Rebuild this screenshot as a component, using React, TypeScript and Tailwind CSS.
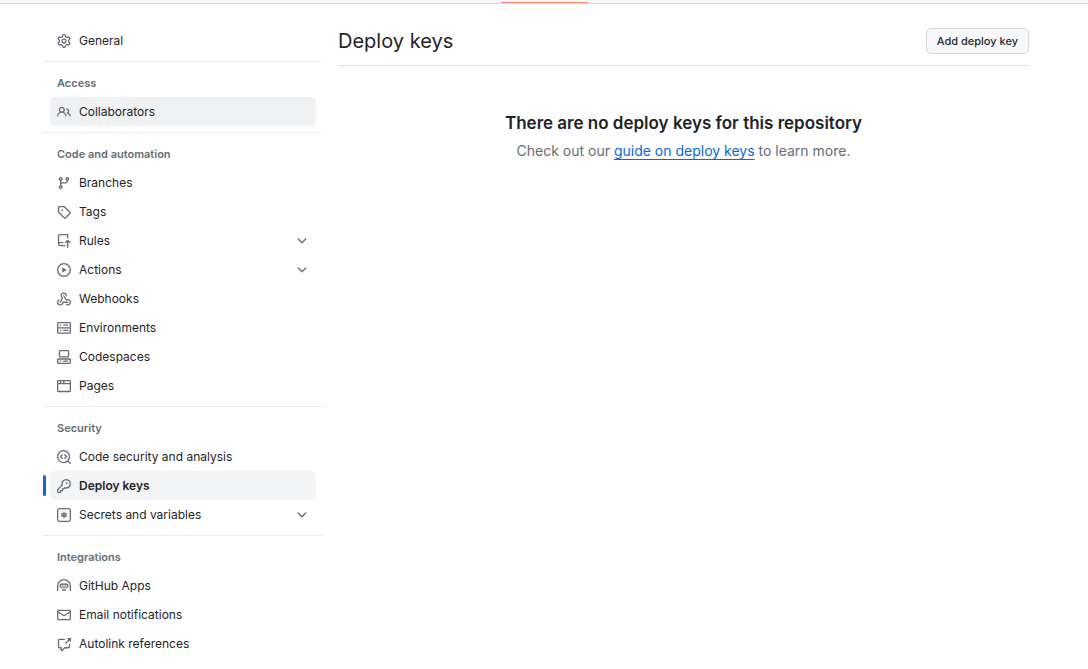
import type { ReactNode } from "react";

const icons = {
  gear: "M8 0a8.2 8.2 0 0 1 .701.031C9.444.095 9.99.645 10.16 1.29l.288 1.107c.018.066.079.158.212.224.231.114.454.243.668.386.123.082.233.09.299.071l1.103-.303c.644-.176 1.392.021 1.82.63.27.385.506.792.704 1.218.315.675.111 1.422-.364 1.891l-.814.806c-.049.048-.098.147-.088.294.016.257.016.515 0 .772-.01.147.038.246.088.294l.814.806c.475.469.679 1.216.364 1.891a7.977 7.977 0 0 1-.704 1.217c-.428.61-1.176.807-1.82.63l-1.102-.302c-.067-.019-.177-.011-.3.071a5.909 5.909 0 0 1-.668.386c-.133.066-.194.158-.211.224l-.29 1.106c-.168.646-.715 1.196-1.458 1.26a8.006 8.006 0 0 1-1.402 0c-.743-.064-1.289-.614-1.458-1.26l-.289-1.106c-.018-.066-.079-.158-.212-.224a5.738 5.738 0 0 1-.668-.386c-.123-.082-.233-.09-.299-.071l-1.103.303c-.644.176-1.392-.021-1.82-.63a8.12 8.12 0 0 1-.704-1.218c-.315-.675-.111-1.422.363-1.891l.815-.806c.05-.048.098-.147.088-.294a6.214 6.214 0 0 1 0-.772c.01-.147-.038-.246-.088-.294l-.815-.806C.635 6.045.431 5.298.746 4.623a7.92 7.92 0 0 1 .704-1.217c.428-.61 1.176-.807 1.82-.63l1.102.302c.067.019.177.011.3-.071.214-.143.437-.272.668-.386.133-.066.194-.158.211-.224l.29-1.106C6.009.645 6.556.095 7.299.03 7.53.01 7.764 0 8 0Zm-.571 1.525c-.036.003-.108.036-.137.146l-.289 1.105c-.147.561-.549.967-.998 1.189-.173.086-.34.183-.5.29-.417.278-.97.423-1.529.27l-1.103-.303c-.109-.03-.175.016-.195.045-.22.312-.412.644-.573.99-.014.031-.021.11.059.19l.815.806c.411.406.562.957.53 1.456a4.709 4.709 0 0 0 0 .582c.032.499-.119 1.05-.53 1.456l-.815.806c-.081.08-.073.159-.059.19.162.346.353.677.573.989.02.03.085.076.195.046l1.102-.303c.56-.153 1.113-.008 1.53.27.161.107.328.204.501.29.447.222.85.629.997 1.189l.289 1.105c.029.109.101.143.137.146a6.6 6.6 0 0 0 1.142 0c.036-.003.108-.036.137-.146l.289-1.105c.147-.561.549-.967.998-1.189.173-.086.34-.183.5-.29.417-.278.97-.423 1.529-.27l1.103.303c.109.029.175-.016.195-.045.22-.313.411-.644.573-.99.014-.031.021-.11-.059-.19l-.815-.806c-.411-.406-.562-.957-.53-1.456a4.709 4.709 0 0 0 0-.582c-.032-.499.119-1.05.53-1.456l.815-.806c.081-.08.073-.159.059-.19a6.464 6.464 0 0 0-.573-.989c-.02-.03-.085-.076-.195-.046l-1.102.303c-.56.153-1.113.008-1.53-.27a4.44 4.44 0 0 0-.501-.29c-.447-.222-.85-.629-.997-1.189l-.289-1.105c-.029-.11-.101-.143-.137-.146a6.6 6.6 0 0 0-1.142 0ZM11 8a3 3 0 1 1-6 0 3 3 0 0 1 6 0ZM9.5 8a1.5 1.5 0 1 0-3.001.001A1.5 1.5 0 0 0 9.5 8Z",
  people:
    "M2 5.5a3.5 3.5 0 1 1 5.898 2.549 5.508 5.508 0 0 1 3.034 4.084.75.75 0 1 1-1.482.235 4 4 0 0 0-7.9 0 .75.75 0 0 1-1.482-.236A5.507 5.507 0 0 1 3.102 8.05 3.493 3.493 0 0 1 2 5.5ZM11 4a3.001 3.001 0 0 1 2.22 5.018 5.01 5.01 0 0 1 2.56 3.012.749.749 0 0 1-.885.954.752.752 0 0 1-.549-.514 3.507 3.507 0 0 0-2.522-2.372.75.75 0 0 1-.574-.73v-.352a.75.75 0 0 1 .416-.672A1.5 1.5 0 0 0 11 5.5.75.75 0 0 1 11 4Zm-5.5-.5a2 2 0 1 0-.001 3.999A2 2 0 0 0 5.5 3.5Z",
  branch:
    "M9.5 3.25a2.25 2.25 0 1 1 3 2.122V6A2.5 2.5 0 0 1 10 8.5H6a1 1 0 0 0-1 1v1.128a2.251 2.251 0 1 1-1.5 0V5.372a2.25 2.25 0 1 1 1.5 0v1.836A2.493 2.493 0 0 1 6 7h4a1 1 0 0 0 1-1v-.628A2.25 2.25 0 0 1 9.5 3.25Zm-6 0a.75.75 0 1 0 1.5 0 .75.75 0 0 0-1.5 0Zm8.25-.75a.75.75 0 1 0 0 1.5.75.75 0 0 0 0-1.5ZM4.25 12a.75.75 0 1 0 0 1.5.75.75 0 0 0 0-1.5Z",
  tag: "M1 7.775V2.75C1 1.784 1.784 1 2.75 1h5.025c.464 0 .91.184 1.238.513l6.25 6.25a1.75 1.75 0 0 1 0 2.474l-5.026 5.026a1.75 1.75 0 0 1-2.474 0l-6.25-6.25A1.752 1.752 0 0 1 1 7.775Zm1.5 0c0 .066.026.13.073.177l6.25 6.25a.25.25 0 0 0 .354 0l5.025-5.025a.25.25 0 0 0 0-.354l-6.25-6.25a.25.25 0 0 0-.177-.073H2.75a.25.25 0 0 0-.25.25ZM6 5a1 1 0 1 1 0 2 1 1 0 0 1 0-2Z",
  repoPush:
    "M1 2.5A2.5 2.5 0 0 1 3.5 0h8.75a.75.75 0 0 1 .75.75v3.5a.75.75 0 0 1-1.5 0V1.5h-8a1 1 0 0 0-1 1v6.708A2.493 2.493 0 0 1 3.5 9h3.25a.75.75 0 0 1 0 1.5H3.5a1 1 0 0 0 0 2h5.75a.75.75 0 0 1 0 1.5H3.5A2.5 2.5 0 0 1 1 11.5Zm13.23 7.79h-.001l-1.224-1.224v6.184a.75.75 0 0 1-1.5 0V9.066L10.28 10.29a.75.75 0 0 1-1.06-1.061l2.505-2.504a.75.75 0 0 1 1.06 0L15.29 9.23a.751.751 0 0 1-.018 1.042.751.751 0 0 1-1.042.018Z",
  play: "M8 0a8 8 0 1 1 0 16A8 8 0 0 1 8 0ZM1.5 8a6.5 6.5 0 1 0 13 0 6.5 6.5 0 0 0-13 0Zm4.879-2.773 4.264 2.559a.25.25 0 0 1 0 .428l-4.264 2.559A.25.25 0 0 1 6 10.559V5.442a.25.25 0 0 1 .379-.215Z",
  webhook:
    "M5.5 4.25a2.25 2.25 0 0 1 4.5 0 .75.75 0 0 0 1.5 0 3.75 3.75 0 1 0-6.14 2.889l-2.272 4.258a.75.75 0 0 0 1.324.706L7 7.25a.75.75 0 0 0-.309-1.015A2.25 2.25 0 0 1 5.5 4.25ZM7.364 3.607a.75.75 0 0 1 1.03.257l2.608 4.349a3.75 3.75 0 1 1-.628 6.785.75.75 0 0 1 .752-1.299 2.25 2.25 0 1 0-.033-3.88.75.75 0 0 1-1.03-.256L7.107 4.636a.75.75 0 0 1 .257-1.03ZM2.9 8.776A.75.75 0 0 1 2.625 9.8 2.25 2.25 0 1 0 6 11.75a.75.75 0 0 1 .75-.751h5.5a.75.75 0 0 1 0 1.5H7.425a3.751 3.751 0 1 1-5.55-3.998.75.75 0 0 1 1.024.274Z",
  server:
    "M1.75 1h12.5c.966 0 1.75.784 1.75 1.75v4c0 .372-.116.717-.314 1 .198.283.314.628.314 1v4a1.75 1.75 0 0 1-1.75 1.75H1.75A1.75 1.75 0 0 1 0 12.75v-4c0-.358.109-.707.314-1a1.739 1.739 0 0 1-.314-1v-4C0 1.784.784 1 1.75 1ZM1.5 2.75v4c0 .138.112.25.25.25h12.5a.25.25 0 0 0 .25-.25v-4a.25.25 0 0 0-.25-.25H1.75a.25.25 0 0 0-.25.25Zm.25 5.75a.25.25 0 0 0-.25.25v4c0 .138.112.25.25.25h12.5a.25.25 0 0 0 .25-.25v-4a.25.25 0 0 0-.25-.25ZM7 4.75A.75.75 0 0 1 7.75 4h4.5a.75.75 0 0 1 0 1.5h-4.5A.75.75 0 0 1 7 4.75ZM7.75 10h4.5a.75.75 0 0 1 0 1.5h-4.5a.75.75 0 0 1 0-1.5ZM3 4.75A.75.75 0 0 1 3.75 4h.5a.75.75 0 0 1 0 1.5h-.5A.75.75 0 0 1 3 4.75ZM3.75 10h.5a.75.75 0 0 1 0 1.5h-.5a.75.75 0 0 1 0-1.5Z",
  codespaces:
    "M0 11.25c0-.966.784-1.75 1.75-1.75h12.5c.966 0 1.75.784 1.75 1.75v3A1.75 1.75 0 0 1 14.25 16H1.75A1.75 1.75 0 0 1 0 14.25Zm2-9.5C2 .784 2.784 0 3.75 0h8.5C13.216 0 14 .784 14 1.75v5a1.75 1.75 0 0 1-1.75 1.75h-8.5A1.75 1.75 0 0 1 2 6.75Zm1.75-.25a.25.25 0 0 0-.25.25v5c0 .138.112.25.25.25h8.5a.25.25 0 0 0 .25-.25v-5a.25.25 0 0 0-.25-.25Zm-2 9.5a.25.25 0 0 0-.25.25v3c0 .138.112.25.25.25h12.5a.25.25 0 0 0 .25-.25v-3a.25.25 0 0 0-.25-.25ZM7 12.75a.75.75 0 0 1 .75-.75h4.5a.75.75 0 0 1 0 1.5h-4.5a.75.75 0 0 1-.75-.75Zm-4 0a.75.75 0 0 1 .75-.75h.5a.75.75 0 0 1 0 1.5h-.5a.75.75 0 0 1-.75-.75Z",
  browser:
    "M0 2.75C0 1.784.784 1 1.75 1h12.5c.966 0 1.75.784 1.75 1.75v10.5A1.75 1.75 0 0 1 14.25 15H1.75A1.75 1.75 0 0 1 0 13.25ZM14.5 6h-13v7.25c0 .138.112.25.25.25h12.5a.25.25 0 0 0 .25-.25Zm-6-3.5v2h6V2.75a.25.25 0 0 0-.25-.25ZM5 2.5v2h2v-2Zm-3.25 0a.25.25 0 0 0-.25.25V4.5h2v-2Z",
  codescan:
    "M8.47 4.97a.75.75 0 0 0 0 1.06L9.94 7.5 8.47 8.97a.75.75 0 1 0 1.06 1.06l2-2a.75.75 0 0 0 0-1.06l-2-2a.75.75 0 0 0-1.06 0ZM6.53 6.03a.75.75 0 0 0-1.06-1.06l-2 2a.75.75 0 0 0 0 1.06l2 2a.75.75 0 1 0 1.06-1.06L5.06 7.5l1.47-1.47Z M12.246 13.307a7.5 7.5 0 1 1 1.06-1.06l2.474 2.473a.749.749 0 0 1-.326 1.275.749.749 0 0 1-.734-.215ZM1.5 7.5a6.002 6.002 0 0 0 3.608 5.504 6.002 6.002 0 0 0 6.486-1.117.748.748 0 0 1 .292-.293A6 6 0 1 0 1.5 7.5Z",
  key: "M10.5 0a5.499 5.499 0 1 1-1.288 10.848l-.932.932a.749.749 0 0 1-.53.22H7v.75a.749.749 0 0 1-.22.53l-.5.5a.749.749 0 0 1-.53.22H5v.75a.749.749 0 0 1-.22.53l-.5.5a.749.749 0 0 1-.53.22h-2A1.75 1.75 0 0 1 0 14.25v-2c0-.199.079-.389.22-.53l4.932-4.932A5.5 5.5 0 0 1 10.5 0Zm-4 5.5c-.001.431.069.86.205 1.269a.75.75 0 0 1-.181.768L1.5 12.56v1.69c0 .138.112.25.25.25h1.69l.06-.06v-1.19a.75.75 0 0 1 .75-.75h1.19l.06-.06v-1.19a.75.75 0 0 1 .75-.75h1.19l1.023-1.025a.75.75 0 0 1 .768-.18A4 4 0 1 0 6.5 5.5ZM11 6a1 1 0 1 1 0-2 1 1 0 0 1 0 2Z",
  keyAsterisk:
    "M0 2.75A2.75 2.75 0 0 1 2.75 0h10.5A2.75 2.75 0 0 1 16 2.75v10.5A2.75 2.75 0 0 1 13.25 16H2.75A2.75 2.75 0 0 1 0 13.25ZM2.75 1.5c-.69 0-1.25.56-1.25 1.25v10.5c0 .69.56 1.25 1.25 1.25h10.5c.69 0 1.25-.56 1.25-1.25V2.75c0-.69-.56-1.25-1.25-1.25ZM8 4a.75.75 0 0 1 .75.75V6.7l1.69-.975a.75.75 0 0 1 .75 1.3L9.5 8l1.69.976a.75.75 0 0 1-.75 1.298L8.75 9.3v1.951a.75.75 0 0 1-1.5 0V9.299l-1.69.976a.75.75 0 0 1-.75-1.3L6.5 8l-1.69-.975a.75.75 0 0 1 .75-1.3l1.69.976V4.75A.75.75 0 0 1 8 4Z",
  hubot:
    "M0 8a8 8 0 1 1 16 0v5.25a.75.75 0 0 1-1.5 0V8a6.5 6.5 0 1 0-13 0v5.25a.75.75 0 0 1-1.5 0V8Zm5.5 4.25a.75.75 0 0 1 .75-.75h3.5a.75.75 0 0 1 0 1.5h-3.5a.75.75 0 0 1-.75-.75ZM3 6.75C3 5.784 3.784 5 4.75 5h6.5c.966 0 1.75.784 1.75 1.75v1.5A1.75 1.75 0 0 1 11.25 10h-6.5A1.75 1.75 0 0 1 3 8.25ZM4.75 6.5a.25.25 0 0 0-.25.25v1.5c0 .138.112.25.25.25h6.5a.25.25 0 0 0 .25-.25v-1.5a.25.25 0 0 0-.25-.25h-.3L9.5 7.6 8 6.5 6.5 7.6 5.05 6.5Z",
  mail: "M1.75 2h12.5c.966 0 1.75.784 1.75 1.75v8.5A1.75 1.75 0 0 1 14.25 14H1.75A1.75 1.75 0 0 1 0 12.25v-8.5C0 2.784.784 2 1.75 2ZM1.5 12.251c0 .138.112.25.25.25h12.5a.25.25 0 0 0 .25-.25V5.809L8.38 9.397a.75.75 0 0 1-.76 0L1.5 5.809v6.442Zm13-8.181v-.32a.25.25 0 0 0-.25-.25H1.75a.25.25 0 0 0-.25.25v.32L8 7.88Z",
  crossReference:
    "M2.75 3.5a.25.25 0 0 0-.25.25v7.5c0 .138.112.25.25.25h2a.75.75 0 0 1 .75.75v2.19l2.72-2.72a.749.749 0 0 1 .53-.22h4.5a.25.25 0 0 0 .25-.25v-2.5a.75.75 0 0 1 1.5 0v2.5A1.75 1.75 0 0 1 13.25 13H9.06l-2.573 2.573A1.458 1.458 0 0 1 4 14.543V13H2.75A1.75 1.75 0 0 1 1 11.25v-7.5C1 2.784 1.784 2 2.75 2h5.5a.75.75 0 0 1 0 1.5ZM16 1.25v4.146a.25.25 0 0 1-.427.177L14.03 4.03l-3.75 3.75a.749.749 0 0 1-1.275-.326.749.749 0 0 1 .215-.734l3.75-3.75-1.543-1.543A.25.25 0 0 1 11.604 1h4.146a.25.25 0 0 1 .25.25Z",
  chevron:
    "M12.78 5.22a.749.749 0 0 1 0 1.06l-4.25 4.25a.749.749 0 0 1-1.06 0L3.22 6.28a.749.749 0 1 1 1.06-1.06L8 8.939l3.72-3.719a.749.749 0 0 1 1.06 0Z",
};

type IconName = keyof typeof icons;

function Icon({ name }: { name: IconName }) {
  return (
    <svg
      aria-hidden="true"
      viewBox="0 0 16 16"
      className="size-[14px] shrink-0 fill-[#656d76]"
    >
      <path
        fillRule={name === "keyAsterisk" || name === "hubot" ? "evenodd" : "nonzero"}
        d={icons[name]}
      />
    </svg>
  );
}

type Item = {
  label: string;
  icon: IconName;
  expandable?: boolean;
  hovered?: boolean;
  current?: boolean;
};

const groups: { title: string; items: Item[] }[] = [
  {
    title: "Access",
    items: [{ label: "Collaborators", icon: "people", hovered: true }],
  },
  {
    title: "Code and automation",
    items: [
      { label: "Branches", icon: "branch" },
      { label: "Tags", icon: "tag" },
      { label: "Rules", icon: "repoPush", expandable: true },
      { label: "Actions", icon: "play", expandable: true },
      { label: "Webhooks", icon: "webhook" },
      { label: "Environments", icon: "server" },
      { label: "Codespaces", icon: "codespaces" },
      { label: "Pages", icon: "browser" },
    ],
  },
  {
    title: "Security",
    items: [
      { label: "Code security and analysis", icon: "codescan" },
      { label: "Deploy keys", icon: "key", current: true },
      { label: "Secrets and variables", icon: "keyAsterisk", expandable: true },
    ],
  },
  {
    title: "Integrations",
    items: [
      { label: "GitHub Apps", icon: "hubot" },
      { label: "Email notifications", icon: "mail" },
      { label: "Autolink references", icon: "crossReference" },
    ],
  },
];

function NavItem({ item }: { item: Item }) {
  const box =
    "flex h-[29px] w-full items-center gap-2 rounded-[5px] px-[7px] text-left hover:bg-[#eff1f3]";
  const state = item.current
    ? "bg-[#f3f4f6] font-semibold"
    : item.hovered
      ? "bg-[#eff1f3]"
      : "";
  const content: ReactNode = (
    <>
      <Icon name={item.icon} />
      <span className="grow">{item.label}</span>
      {item.expandable && <Icon name="chevron" />}
    </>
  );
  return (
    <li className="relative px-[7px]">
      {item.current && (
        <span className="absolute top-1 left-0 h-[21px] w-[3px] rounded-sm bg-[#0969da]" />
      )}
      {item.expandable ? (
        <button type="button" aria-expanded="false" className={`${box} ${state}`}>
          {content}
        </button>
      ) : (
        <a
          href="#"
          aria-current={item.current ? "page" : undefined}
          className={`${box} ${state}`}
        >
          {content}
        </a>
      )}
    </li>
  );
}

export default function App() {
  return (
    <div className="bg-white font-['Inter','Liberation_Sans',sans-serif] text-[#1f2328]">
      <header className="h-1 border-b border-[#d0d7de] bg-[#f6f8fa] pt-[2px] pl-[501px]">
        <div className="h-px w-[87px] bg-[#fd8c73]" />
      </header>
      <div className="flex items-start gap-[15px] pr-[59px] pl-[43px]">
        <nav aria-label="Settings" className="w-[280px] shrink-0 pt-[22px] pb-3 text-xs">
          <ul>
            <NavItem item={{ label: "General", icon: "gear" }} />
          </ul>
          {groups.map((group) => (
            <section key={group.title} className="mt-[6px] border-t border-[#e8ebee]">
              <h2 className="px-[14px] pt-[11px] pb-1 text-[11px] leading-5 font-semibold text-[#656d76]">
                {group.title}
              </h2>
              <ul>
                {group.items.map((item) => (
                  <NavItem key={item.label} item={item} />
                ))}
              </ul>
            </section>
          ))}
        </nav>
        <main className="min-w-0 grow pt-[21px]">
          <div className="flex items-center justify-between border-b border-[#d8dee4] pb-2">
            <h1 className="text-xl leading-8">Deploy keys</h1>
            <button
              type="button"
              className="h-[26px] rounded-[5px] border border-[#d5d8da] bg-[#f6f8fa] px-[10px] text-[11px] font-medium text-[#24292f]"
            >
              Add deploy key
            </button>
          </div>
          <div className="pt-[43px] text-center">
            <h2 className="text-[17px] leading-7 font-semibold">
              There are no deploy keys for this repository
            </h2>
            <p className="text-sm leading-7 text-[#656d76]">
              Check out our{" "}
              <a href="#" className="text-[#0969da] underline underline-offset-[3px]">
                guide on deploy keys
              </a>{" "}
              to learn more.
            </p>
          </div>
        </main>
      </div>
    </div>
  );
}
